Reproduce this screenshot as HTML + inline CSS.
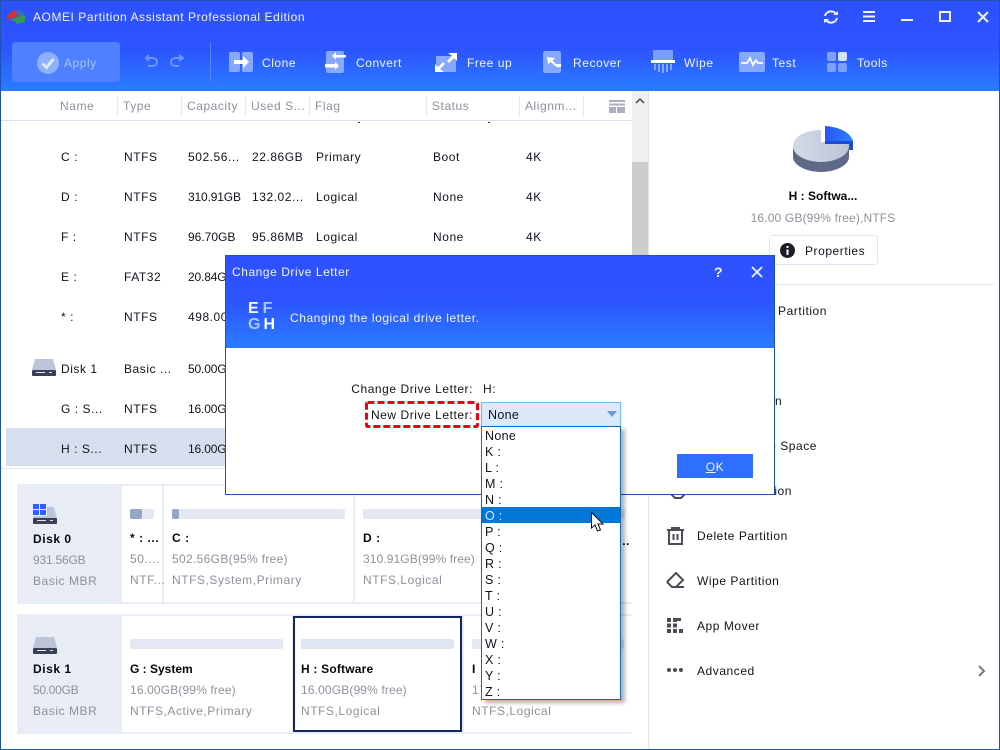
<!DOCTYPE html>
<html><head><meta charset="utf-8"><style>
*{box-sizing:border-box;margin:0;padding:0}
html,body{width:1000px;height:750px;overflow:hidden;background:#fff}
body{position:relative;font-family:"Liberation Sans",sans-serif;font-size:12px;color:#10131c;letter-spacing:.55px}
.t{position:absolute;height:16px;line-height:16px;white-space:nowrap}
.b{position:absolute}
.g{color:#8d919c}
.w{color:#f0f4ff}
.h{font-weight:bold;color:#05070c}
.n{letter-spacing:-.15px}
svg{position:absolute;overflow:visible}
.it{position:absolute;left:1px;width:138px;height:16px;line-height:16px;padding-left:2px;font-size:12.5px;letter-spacing:.3px}
</style></head><body>
<div class="b" style="left:0;top:0;width:1000px;height:91px;background:linear-gradient(#2d50fd 0,#2d55ff 55%,#2a7cff 100%)"></div>
<svg style="left:8px;top:9px" width="18" height="16"><path d="M0 7Q2 2 8 1L9 8 2 9 0 12Z" fill="#d8322e"/><path d="M8 1Q15 1 17 6L10 8Z" fill="#3b6fb5"/><path d="M3 10L10 8 17 6V13L8 15 8 12 3 12Z" fill="#2f9a55"/></svg>
<div class="t w" style="left:33px;top:9px">AOMEI Partition Assistant Professional Edition</div>

<div class="b" style="left:12px;top:42px;width:108px;height:40px;background:#4f80ff;border-radius:3px"></div>
<svg style="left:37px;top:52px" width="22" height="22"><circle cx="11" cy="11" r="11" fill="#8eb0ff"/><path d="M5.500 11.500L9.500 15.500 16.500 7" stroke="#e0e9ff" stroke-width="3" fill="none"/></svg>
<div class="t" style="left:64px;top:55px;color:#a9c4ff">Apply</div>
<svg style="left:144px;top:54px" width="44" height="14" fill="none" stroke="#6d96ff" stroke-width="2"><path d="M2 4H9A4 4 0 0 1 9 12H4M5 1L2 4 5 7"/><path d="M42 4H34A4 4 0 0 0 34 12H38M38 1L42 4 38 7" transform="translate(-3 0)"/></svg>
<div class="b" style="left:210px;top:42px;width:1px;height:39px;background:#5586ff"></div>

<svg style="left:229px;top:52px" width="24" height="20"><rect width="11" height="20" rx="2" fill="#86a8ff"/><rect x="13" width="11" height="20" rx="2" fill="#86a8ff"/><path d="M5 8H14V4L20 10 14 16V12H5Z" fill="#fff"/></svg>
<div class="t w" style="left:262px;top:55px">Clone</div>
<svg style="left:325px;top:51px" width="21" height="22"><rect x="1" width="18" height="22" rx="2" fill="#86a8ff"/><path d="M21 4H11V1L7 5 11 9V6.500H21Z" fill="#fff"/><path d="M0 13H10V10.500L14 15 10 19V16.500H0Z" fill="#fff"/></svg>
<div class="t w" style="left:356px;top:55px">Convert</div>
<svg style="left:435px;top:53px" width="22" height="19"><rect x="1" y="3" width="20" height="16" fill="#86a8ff"/><path d="M13 0H22V8L19 5 14 10 12 8 17 3Z" fill="#fff"/><path d="M9 19H0V11L3 14 8 9 10 11 5 16Z" fill="#fff"/></svg>
<div class="t w" style="left:467px;top:55px">Free up</div>
<svg style="left:543px;top:51px" width="20" height="22"><rect width="18" height="22" rx="2" fill="#86a8ff"/><path d="M4 6L12 7 9.500 9.500 13 13H18V16Q14 17 11 14L7.500 11 5 13Z" fill="#fff"/></svg>
<div class="t w" style="left:573px;top:55px">Recover</div>
<svg style="left:651px;top:50px" width="24" height="23"><rect x="2" width="20" height="10" fill="#7c9fff"/><rect y="10" width="24" height="3" fill="#fff"/><g fill="#86a8ff"><rect x="3" y="14" width="2" height="6"/><rect x="7" y="14" width="2" height="8"/><rect x="11" y="14" width="2" height="9"/><rect x="15" y="14" width="2" height="8"/><rect x="19" y="14" width="2" height="6"/></g></svg>
<div class="t w" style="left:684px;top:55px">Wipe</div>
<svg style="left:739px;top:52px" width="26" height="20"><rect width="26" height="20" rx="2" fill="#86a8ff"/><path d="M2 11H8L11 6 14 13 17 8 19 11H24" stroke="#fff" stroke-width="1.800" fill="none"/></svg>
<div class="t w" style="left:772px;top:55px">Test</div>
<svg style="left:827px;top:52px" width="20" height="20"><rect width="9" height="9" rx="2" fill="#7f9fff"/><rect x="11" width="9" height="9" rx="2" fill="#d5e0ff"/><rect y="11" width="9" height="9" rx="2" fill="#7f9fff"/><rect x="11" y="11" width="9" height="9" rx="2" fill="#7f9fff"/></svg>
<div class="t w" style="left:857px;top:55px">Tools</div>

<svg style="left:823px;top:9px" width="16" height="16" fill="none" stroke="#eef3ff" stroke-width="2"><path d="M2 7A6 5.500 0 0 1 13 5M14 9A6 5.500 0 0 1 3 11"/><path d="M10 6H15V2Z M6 10H1V14Z" fill="#eef3ff" stroke="none"/></svg>
<svg style="left:863px;top:11px" width="12" height="11" fill="#eef3ff"><rect width="12" height="2"/><rect y="4.500" width="12" height="2"/><rect y="9" width="12" height="2"/></svg>
<div class="b" style="left:901px;top:19px;width:12px;height:2px;background:#eef3ff"></div>
<div class="b" style="left:939px;top:11px;width:12px;height:11px;border:2px solid #eef3ff"></div>
<svg style="left:978px;top:12px" width="10" height="10" stroke="#eef3ff" stroke-width="2"><path d="M0 0L10 10M10 0L0 10"/></svg>

<!-- table -->
<div class="g t" style="left:60px;top:98px">Name</div>
<div class="g t" style="left:123px;top:98px">Type</div>
<div class="g t" style="left:187px;top:98px">Capacity</div>
<div class="g t" style="left:251px;top:98px">Used S...</div>
<div class="g t" style="left:315px;top:98px">Flag</div>
<div class="g t" style="left:432px;top:98px">Status</div>
<div class="g t" style="left:525px;top:98px">Alignm...</div>
<div class="b" style="left:117px;top:95px;width:1px;height:22px;background:#e4e8f0"></div>
<div class="b" style="left:181px;top:95px;width:1px;height:22px;background:#e4e8f0"></div>
<div class="b" style="left:245px;top:95px;width:1px;height:22px;background:#e4e8f0"></div>
<div class="b" style="left:309px;top:95px;width:1px;height:22px;background:#e4e8f0"></div>
<div class="b" style="left:426px;top:95px;width:1px;height:22px;background:#e4e8f0"></div>
<div class="b" style="left:519px;top:95px;width:1px;height:22px;background:#e4e8f0"></div>
<div class="b" style="left:583px;top:95px;width:1px;height:22px;background:#e4e8f0"></div>
<svg style="left:609px;top:100px" width="16" height="13" fill="#a7b0c0"><rect width="16" height="2"/><rect y="3.500" width="16" height="2"/><rect y="7" width="7" height="6"/><rect x="8" y="7" width="8" height="6"/></svg>
<div class="b" style="left:1px;top:120px;width:631px;height:1px;background:#d8e0ee"></div>
<div class="b" style="left:358px;top:122px;width:2px;height:1px;background:#333"></div>
<div class="b" style="left:488px;top:122px;width:2px;height:1px;background:#333"></div>
<div class="b" style="left:632px;top:91px;width:16px;height:377px;background:#f0f0f0"></div>
<div class="b" style="left:632px;top:162px;width:16px;height:306px;background:#cdcdcd"></div>
<svg style="left:636px;top:98px" width="8" height="5" fill="none" stroke="#444" stroke-width="1.500"><path d="M0 5L4 1 8 5"/></svg>
<div class="b" style="left:648px;top:91px;width:1px;height:659px;background:#dfe6f3"></div>

<div class="t" style="left:61px;top:149px">C :</div><div class="t" style="left:124px;top:149px">NTFS</div><div class="t" style="left:188px;top:149px">502.56...</div><div class="t" style="left:252px;top:149px">22.86GB</div><div class="t" style="left:316px;top:149px">Primary</div><div class="t" style="left:433px;top:149px">Boot</div><div class="t" style="left:526px;top:149px">4K</div>
<div class="t" style="left:61px;top:189px">D :</div><div class="t" style="left:124px;top:189px">NTFS</div><div class="t n" style="left:188px;top:189px">310.91GB</div><div class="t" style="left:252px;top:189px">132.02...</div><div class="t" style="left:316px;top:189px">Logical</div><div class="t" style="left:433px;top:189px">None</div><div class="t" style="left:526px;top:189px">4K</div>
<div class="t" style="left:61px;top:229px">F :</div><div class="t" style="left:124px;top:229px">NTFS</div><div class="t" style="left:188px;top:229px;letter-spacing:0">96.70GB</div><div class="t" style="left:252px;top:229px">95.86MB</div><div class="t" style="left:316px;top:229px">Logical</div><div class="t" style="left:433px;top:229px">None</div><div class="t" style="left:526px;top:229px">4K</div>
<div class="t" style="left:61px;top:269px">E :</div><div class="t" style="left:124px;top:269px">FAT32</div><div class="t n" style="left:188px;top:269px">20.84GB</div>
<div class="t" style="left:61px;top:309px">* :</div><div class="t" style="left:124px;top:309px">NTFS</div><div class="t" style="left:188px;top:309px">498.00MB</div>
<svg style="left:32px;top:359px" width="24" height="17"><path d="M3 0H21L24 11H0Z" fill="#bcc4d8"/><rect y="11" width="24" height="6" rx="1" fill="#3a4058"/><rect x="4" y="13" width="9" height="1" fill="#dfe4ef"/><rect x="17" y="13" width="3" height="1" fill="#dfe4ef"/></svg>
<div class="t" style="left:61px;top:361px">Disk 1</div><div class="t" style="left:124px;top:361px">Basic ...</div><div class="t n" style="left:188px;top:361px">50.00GB</div>
<div class="t" style="left:61px;top:401px">G : S...</div><div class="t" style="left:124px;top:401px">NTFS</div><div class="t n" style="left:188px;top:401px">16.00GB</div>
<div class="b" style="left:6px;top:428px;width:626px;height:38px;background:#d5dfee"></div>
<div class="t" style="left:61px;top:441px">H : S...</div><div class="t" style="left:124px;top:441px">NTFS</div><div class="t n" style="left:188px;top:441px">16.00GB</div>
<div class="b" style="left:1px;top:468px;width:647px;height:1px;background:#dfe6f3"></div>

<!-- disk 0 -->
<div class="b" style="left:17px;top:484px;width:615px;height:120px;background:#e8ecf5"></div>
<div class="b" style="left:122px;top:486px;width:40px;height:116px;background:#fff"></div>
<div class="b" style="left:164px;top:486px;width:189px;height:116px;background:#fff"></div>
<div class="b" style="left:355px;top:486px;width:190px;height:116px;background:#fff"></div>
<div class="b" style="left:547px;top:486px;width:85px;height:116px;background:#fff"></div>
<svg style="left:33px;top:504px" width="24" height="20"><path d="M3 3H21L24 15H0Z" fill="#bcc4d8"/><rect y="14" width="24" height="6" rx="1" fill="#3a4058"/><rect x="4" y="16" width="9" height="1" fill="#dfe4ef"/><rect x="17" y="16" width="3" height="1" fill="#dfe4ef"/><rect x="-1" y="-1" width="15" height="13" fill="#e8ecf5"/><g fill="#2d62ff"><rect width="6" height="5"/><rect x="7" width="6" height="5"/><rect y="6" width="6" height="5"/><rect x="7" y="6" width="6" height="5"/></g></svg>
<div class="t h" style="left:33px;top:531px">Disk 0</div>
<div class="t g" style="left:33px;top:552px;letter-spacing:-.2px">931.56GB</div>
<div class="t g" style="left:33px;top:573px">Basic MBR</div>
<div class="b" style="left:130px;top:509px;width:24px;height:10px;background:#e3e8f4;border-radius:2px"></div><div class="b" style="left:130px;top:509px;width:12px;height:10px;background:#94a7c8;border-radius:2px"></div>
<div class="b" style="left:172px;top:509px;width:173px;height:10px;background:#e3e8f4;border-radius:2px"></div><div class="b" style="left:172px;top:509px;width:7px;height:10px;background:#94a7c8;border-radius:2px"></div>
<div class="b" style="left:363px;top:509px;width:174px;height:10px;background:#e3e8f4;border-radius:2px"></div>
<div class="b" style="left:555px;top:509px;width:70px;height:10px;background:#e3e8f4;border-radius:2px"></div>
<div class="t h" style="left:130px;top:530px">* : ...</div><div class="t h" style="left:172px;top:530px">C :</div><div class="t h" style="left:363px;top:530px">D :</div><div class="t h" style="left:555px;top:533px;width:75px;text-align:right">...</div>
<div class="t g" style="left:130px;top:551px">50....</div><div class="t g" style="left:172px;top:551px;letter-spacing:.33px">502.56GB(95% free)</div><div class="t g" style="left:363px;top:551px;letter-spacing:.1px">310.91GB(99% free)</div>
<div class="t g" style="left:130px;top:572px">NTF...</div><div class="t g" style="left:172px;top:572px">NTFS,System,Primary</div><div class="t g" style="left:363px;top:572px">NTFS,Logical</div>

<!-- disk 1 -->
<div class="b" style="left:17px;top:614px;width:615px;height:120px;background:#e8ecf5"></div>
<div class="b" style="left:122px;top:616px;width:170px;height:116px;background:#fff"></div>
<div class="b" style="left:293px;top:616px;width:169px;height:116px;background:#fff;border:2px solid #14245f"></div>
<div class="b" style="left:464px;top:616px;width:168px;height:116px;background:#fff"></div>
<svg style="left:33px;top:637px" width="24" height="17"><path d="M3 0H21L24 11H0Z" fill="#bcc4d8"/><rect y="11" width="24" height="6" rx="1" fill="#3a4058"/><rect x="4" y="13" width="9" height="1" fill="#dfe4ef"/><rect x="17" y="13" width="3" height="1" fill="#dfe4ef"/></svg>
<div class="t h" style="left:33px;top:661px">Disk 1</div>
<div class="t g" style="left:33px;top:682px;letter-spacing:-.3px">50.00GB</div>
<div class="t g" style="left:33px;top:703px">Basic MBR</div>
<div class="b" style="left:130px;top:639px;width:153px;height:10px;background:#e3e8f4;border-radius:2px"></div>
<div class="b" style="left:301px;top:639px;width:153px;height:10px;background:#dfe5f1;border-radius:2px"></div>
<div class="b" style="left:472px;top:639px;width:152px;height:10px;background:#e3e8f4;border-radius:2px"></div>
<div class="t h" style="left:130px;top:661px;letter-spacing:0">G : System</div><div class="t h" style="left:301px;top:661px;letter-spacing:.2px">H : Software</div><div class="t h" style="left:472px;top:661px">I</div>
<div class="t g" style="left:130px;top:682px;letter-spacing:.14px">16.00GB(99% free)</div><div class="t g" style="left:301px;top:682px;letter-spacing:.14px">16.00GB(99% free)</div><div class="t g" style="left:472px;top:682px">17.99GB</div>
<div class="t g" style="left:130px;top:703px">NTFS,Active,Primary</div><div class="t g" style="left:301px;top:703px">NTFS,Logical</div><div class="t g" style="left:472px;top:703px">NTFS,Logical</div>

<!-- right panel -->
<svg style="left:793px;top:126px" width="60" height="46"><defs><linearGradient id="a" x1="0" x2="1"><stop offset="0" stop-color="#d5d9e5"/><stop offset="1" stop-color="#bcc4d8"/></linearGradient><linearGradient id="c" x1="0" x2="1"><stop offset="0" stop-color="#2a55f5"/><stop offset="1" stop-color="#2b82ff"/></linearGradient></defs><path d="M0 20V31C0 39 13 46 28 46S56 39 56 31V20Z" fill="#5e6a88"/><path d="M28 4C12 4 0 11 0 20S13 36 28 36 56 29 56 20V16H28Z" fill="url(#a)"/><path d="M32 0C46 1 57 6 60 15V18H32Z" fill="url(#c)"/><path d="M32 15H60V24H56V18H32Z" fill="#1f4bd0"/><rect x="28" y="0" width="4" height="16" fill="#fff"/></svg>
<div class="t h" style="left:723px;top:188px;width:200px;text-align:center;letter-spacing:0">H : Softwa...</div>
<div class="t g" style="left:723px;top:210px;width:200px;text-align:center;letter-spacing:.15px">16.00 GB(99% free),NTFS</div>
<div class="b" style="left:769px;top:235px;width:109px;height:30px;border:1px solid #dfe6f3;border-radius:3px;background:#fff"></div>
<svg style="left:780px;top:243px" width="15" height="15"><circle cx="7.500" cy="7.500" r="7.500" fill="#1b1d26"/><rect x="6.500" y="6.500" width="2" height="5.500" fill="#fff"/><rect x="6.500" y="3" width="2" height="2" fill="#fff"/></svg>
<div class="t" style="left:805px;top:243px">Properties</div>
<div class="b" style="left:660px;top:284px;width:334px;height:1px;background:#dfe6f3"></div>
<div class="t" style="left:697px;top:303px;width:130px;text-align:right">Partition</div>
<div class="t" style="left:697px;top:438px;width:120px;text-align:right">e Space</div>
<div class="t" style="left:697px;top:483px;width:95px;text-align:right">ion</div>
<div class="t" style="left:775px;top:393px">n</div>
<div class="t" style="left:697px;top:528px">Delete Partition</div>
<div class="t" style="left:697px;top:573px">Wipe Partition</div>
<div class="t" style="left:697px;top:618px">App Mover</div>
<div class="t" style="left:697px;top:663px">Advanced</div>
<svg style="left:667px;top:486px" width="20" height="14" fill="none" stroke="#4a4d58" stroke-width="2"><path d="M1 5L8 12 14 12 18 8"/></svg>
<svg style="left:667px;top:527px" width="17" height="18" fill="none" stroke="#4a4d58" stroke-width="2"><path d="M0 3H17M5 3V1H12V3M2 3V17H15V3M6.500 7V13M10.500 7V13"/></svg>
<svg style="left:666px;top:572px" width="19" height="17" fill="none" stroke="#4a4d58" stroke-width="2"><path d="M1 10L10 1 17 8 10 15H18M1 10L6 15H10"/></svg>
<svg style="left:667px;top:618px" width="16" height="15" fill="#4a4d58"><rect width="4" height="4"/><rect x="6" width="4" height="4"/><rect x="10" y="0" width="4" height="3"/><rect y="5.500" width="4" height="4"/><rect x="6" y="5.500" width="4" height="4"/><rect y="11" width="4" height="4"/><rect x="6" y="11" width="4" height="4"/><rect x="12" y="11" width="4" height="4"/></svg>
<svg style="left:667px;top:668px" width="16" height="4" fill="#4a4d58"><circle cx="2" cy="2" r="2"/><circle cx="8" cy="2" r="2"/><circle cx="14" cy="2" r="2"/></svg>
<svg style="left:978px;top:665px" width="7" height="12" fill="none" stroke="#777b86" stroke-width="2"><path d="M1 1L6 6 1 11"/></svg>

<!-- dialog -->
<div class="b" style="left:225px;top:255px;width:550px;height:240px;background:#fff;border:1px solid #1a56b0"></div>
<div class="b" style="left:226px;top:256px;width:548px;height:92px;background:linear-gradient(#2d50fd 0,#2d55ff 50%,#2a7cff 100%)"></div>
<div class="t w" style="left:232px;top:264px">Change Drive Letter</div>
<div class="t w" style="left:714px;top:264px;font-size:14px;font-weight:bold">?</div>
<svg style="left:752px;top:267px" width="10" height="10" stroke="#eef3ff" stroke-width="1.800"><path d="M0 0L10 10M10 0L0 10"/></svg>
<div class="t" style="left:248px;top:301px;font-weight:900;font-size:16px;color:#fff;letter-spacing:4px">E<span style="color:#a9c4ff">F</span></div>
<div class="t" style="left:248px;top:317px;font-weight:900;font-size:16px;color:#fff;letter-spacing:3px"><span style="color:#a9c4ff">G</span>H</div>
<div class="t w" style="left:290px;top:310px">Changing the logical drive letter.</div>
<div class="t" style="left:273px;top:381px;width:200px;text-align:right">Change Drive Letter:</div>
<div class="t" style="left:483px;top:381px">H:</div>
<div class="t" style="left:273px;top:407px;width:200px;text-align:right">New Drive Letter:</div>
<svg style="left:365px;top:401px" width="114" height="27" fill="none"><rect x="1.500" y="1.500" width="111" height="24" rx="1" stroke="#f00018" stroke-width="3" stroke-dasharray="7 3"/></svg>
<div class="b" style="left:481px;top:402px;width:140px;height:25px;background:#dce9fb;border:1px solid #66c3f5"></div>
<div class="t" style="left:488px;top:407px;font-size:12.500px;letter-spacing:.3px">None</div>
<svg style="left:607px;top:411px" width="10" height="6"><path d="M0 0H10L5 6Z" fill="#6a9bd8"/></svg>
<div class="b" style="left:677px;top:454px;width:76px;height:24px;background:#2f6fff"></div>
<div class="t" style="left:677px;top:459px;width:76px;text-align:center;color:#eef3ff"><span style="text-decoration:underline">O</span>K</div>

<!-- dropdown -->
<div class="b" style="left:481px;top:426px;width:140px;height:274px;background:#fff;border:1px solid #0a6cc4;box-shadow:4px 3px 4px rgba(0,0,0,.3)">
<div class="it" style="top:1px">None</div><div class="it" style="top:17px">K :</div><div class="it" style="top:33px">L :</div><div class="it" style="top:49px">M :</div><div class="it" style="top:65px">N :</div>
<div class="it" style="left:0;width:138px;top:80px;background:#0078d7;color:#dce9fb;padding-left:3px;line-height:18px">O :</div>
<div class="it" style="top:97px">P :</div><div class="it" style="top:113px">Q :</div><div class="it" style="top:129px">R :</div><div class="it" style="top:145px">S :</div><div class="it" style="top:161px">T :</div><div class="it" style="top:177px">U :</div><div class="it" style="top:193px">V :</div><div class="it" style="top:209px">W :</div><div class="it" style="top:225px">X :</div><div class="it" style="top:241px">Y :</div><div class="it" style="top:257px">Z :</div>
</div>
<svg style="left:591px;top:512px" width="13" height="20"><path d="M.5 .5V16L4 13 6.500 19 9.500 18 7 12H12Z" fill="#fff" stroke="#111" stroke-width="1"/></svg>

<!-- window border -->
<div class="b" style="left:0;top:0;width:1000px;height:750px;border:1px solid #1a56b0;pointer-events:none"></div>
</body></html>
